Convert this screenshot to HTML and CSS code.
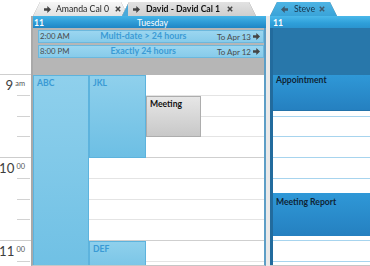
FILE: index.html
```html
<!DOCTYPE html>
<html>
<head>
<meta charset="utf-8">
<link rel="stylesheet" href="styles.css">
</head>
<body>
<div class="app">
  <div class="timecol">
    <div class="time-top"></div>
    <div class="hour">
      <div class="tlabel"><span class="hh">9</span><span class="mm">am</span></div>
      <div class="tick t1"></div><div class="tick t2"></div><div class="tick t3"></div><div class="tick full"></div>
    </div>
    <div class="hour">
      <div class="tlabel"><span class="hh">10</span><span class="mm">00</span></div>
      <div class="tick t1"></div><div class="tick t2"></div><div class="tick t3"></div><div class="tick full"></div>
    </div>
    <div class="hour">
      <div class="tlabel"><span class="hh">11</span><span class="mm">00</span></div>
      <div class="tick t1"></div><div class="tick t2"></div><div class="tick t3"></div><div class="tick full"></div>
    </div>
  </div>

  <div class="group g1">
    <div class="tabs">
      <div class="tabwrap">
        <div class="tab tab-amanda">
          <svg class="ic-arrow" viewBox="0 0 7 7" width="7" height="7"><path d="M0 2.2H3.3V0L7 3.5 3.3 7V4.8H0Z" fill="#454545"/></svg>
          <span class="tab-text">Amanda Cal 0</span>
          <svg class="ic-close" viewBox="0 0 6 6" width="6" height="6"><path d="M0.8 0.8L5.2 5.2M5.2 0.8L0.8 5.2" stroke="#444" stroke-width="1.5"/></svg>
        </div>
      </div>
      <div class="tabwrap wrap-david">
        <div class="tab tab-david">
          <svg class="ic-arrow" viewBox="0 0 7 7" width="7" height="7"><path d="M0 2.2H3.3V0L7 3.5 3.3 7V4.8H0Z" fill="#454545"/></svg>
          <span class="tab-text bold">David - David Cal 1</span>
          <svg class="ic-close" viewBox="0 0 6 6" width="6" height="6"><path d="M0.8 0.8L5.2 5.2M5.2 0.8L0.8 5.2" stroke="#444" stroke-width="1.5"/></svg>
        </div>
      </div>
    </div>
    <div class="frame frame1">
      <div class="dayhead">
        <span class="dnum">11</span><span class="dname">Tuesday</span><span></span>
      </div>
      <div class="allday">
        <div class="adbar">
          <span class="adtime">2:00 AM</span>
          <span class="adtitle">Multi-date &gt; 24 hours</span>
          <span class="adto">To Apr 13 <svg viewBox="0 0 7 7" width="7" height="7"><path d="M0 2.2H3.3V0L7 3.5 3.3 7V4.8H0Z" fill="#454545"/></svg></span>
        </div>
        <div class="adbar">
          <span class="adtime">8:00 PM</span>
          <span class="adtitle">Exactly 24 hours</span>
          <span class="adto">To Apr 12 <svg viewBox="0 0 7 7" width="7" height="7"><path d="M0 2.2H3.3V0L7 3.5 3.3 7V4.8H0Z" fill="#454545"/></svg></span>
        </div>
      </div>
      <div class="daybody">
        <div class="slots">
          <div class="slot"></div><div class="slot"></div><div class="slot"></div><div class="slot hr"></div>
          <div class="slot"></div><div class="slot"></div><div class="slot"></div><div class="slot hr"></div>
          <div class="slot"></div><div class="slot"></div>
        </div>
        <div class="events">
          <div class="ev light ev-abc">ABC</div>
          <div class="ev light ev-jkl">JKL</div>
          <div class="ev grey ev-meet">Meeting</div>
          <div class="ev light ev-def">DEF</div>
        </div>
      </div>
    </div>
  </div>

  <div class="gap"></div>

  <div class="group g2">
    <div class="tabs">
      <div class="tabwrap">
        <div class="tab tab-steve">
          <svg class="ic-arrow" viewBox="0 0 7 7" width="7" height="7"><path d="M7 2.2H3.7V0L0 3.5 3.7 7V4.8H7Z" fill="#3e5a6e"/></svg>
          <span class="tab-text steve-text">Steve</span>
          <svg class="ic-close" viewBox="0 0 6 6" width="6" height="6"><path d="M0.8 0.8L5.2 5.2M5.2 0.8L0.8 5.2" stroke="#3e5a6e" stroke-width="1.5"/></svg>
        </div>
      </div>
    </div>
    <div class="frame frame2">
      <div class="dayhead dayhead2"><span class="dnum">11</span></div>
      <div class="allday2"></div>
      <div class="daybody daybody2">
        <div class="slots">
          <div class="slot"></div><div class="slot"></div><div class="slot"></div><div class="slot"></div>
          <div class="slot"></div><div class="slot"></div><div class="slot"></div><div class="slot"></div>
          <div class="slot"></div><div class="slot"></div>
        </div>
        <div class="events events2">
          <div class="ev dark ev-appt">Appointment</div>
          <div class="ev dark ev-report">Meeting Report</div>
        </div>
      </div>
    </div>
  </div>
</div>
</body>
</html>
```

FILE: styles.css
```css
* { box-sizing: border-box; }
html, body { margin: 0; padding: 0; }
body {
  width: 370px;
  height: 266px;
  overflow: hidden;
  background: #fff;
  font-family: Lato, "Liberation Sans", sans-serif;
  font-size: 8.5px;
  color: #222;
}
.app { display: flex; height: 266px; overflow: hidden; }

/* time column */
.timecol { width: 31px; flex: none; display: flex; flex-direction: column; color: #444; overflow: hidden; }
.time-top { height: 75px; flex: none; border-bottom: 1px solid #cfcfcf; }
.hour { display: grid; grid-template-columns: 100%; grid-template-rows: repeat(4, 20.75px); flex: none; }
.tlabel {
  grid-row: 1; grid-column: 1;
  display: flex; justify-content: flex-end; align-items: flex-start;
  padding: 4px 6px 0 0; line-height: 1;
}
.hh { font-size: 13.2px; color: #3d3d3d; }
.mm { font-size: 7.4px; margin-left: 2px; margin-top: 1px; color: #555; }
.tick { grid-column: 1; align-self: end; justify-self: end; width: 13px; height: 1px; margin-right: 1px; background: #d2d2d2; }
.t1 { grid-row: 1; }
.t2 { grid-row: 2; }
.t3 { grid-row: 3; }
.tick.full { grid-row: 4; width: auto; justify-self: stretch; margin-right: 0; background: #cdcdcd; }

/* groups */
.group { display: flex; flex-direction: column; }
.g1 { width: 235px; flex: none; }
.g2 { flex: 1; min-width: 0; }
.tabs { height: 16px; flex: none; display: flex; align-items: flex-end; }
.g1 .tabs { padding-left: 2px; }
.tabwrap { filter: drop-shadow(0 0 0.5px #808080); }
.wrap-david { margin-left: -6px; }
.tab {
  height: 14px;
  display: flex; align-items: center;
  padding-left: 11px;
  clip-path: polygon(7px 0, calc(100% - 7px) 0, 100% 100%, 0 100%);
  white-space: nowrap; line-height: 1;
  font-size: 8.7px;
}
.tab-amanda { width: 95px; background: linear-gradient(#f7f7f7, #e2e2e2); }
.tab-david {
  width: 134px;
  background: linear-gradient(to right, #4aa9da 0, #4aa9da 6px, transparent 6px), linear-gradient(#e2e2e2, #cfcfcf);
}
.tab-steve { width: 67px; background: linear-gradient(#4db4e4, #3aa3d8); }
.ic-arrow { flex: none; margin-right: 5px; }
.tab-david .ic-arrow { margin-right: 6px; }
.tab-text { color: #1e1e1e; }
.tab-text.bold { font-weight: 700; color: #111; }
.steve-text { color: #18344a; margin-left: 1px; }
.ic-close { flex: none; margin-left: 6px; }
.tab-david .ic-close { margin-left: 7px; }
.tab-steve .ic-close { margin-left: 4px; }

/* frames */
.frame { flex: 1; min-height: 0; display: flex; flex-direction: column; border-bottom: 1px solid #c6c6c6; }
.frame1 { border-left: 2px solid #a9a9a9; border-right: 2px solid #5d9ec6; }
.dayhead {
  height: 12px; flex: none;
  display: grid; grid-template-columns: 1fr auto 1fr; align-items: end;
  color: #fff; line-height: 1; font-size: 8.7px;
  background: linear-gradient(#46b4e7, #2d9ad5 55%, #1f86c5);
  padding-left: 1px;
  margin-right: -2px;
}
.dnum { font-weight: 700; }
.dname { margin-left: 5px; }
.dayhead2 { margin-right: 0; padding-left: 3px; background: linear-gradient(#4ab8ea, #2e9fd9 60%, #2a94cf); }

.allday {
  height: 47px; flex: none;
  background: #b6b6b6;
  padding: 2px 0 0 5px;
  display: flex; flex-direction: column; gap: 2px;
}
.adbar {
  height: 13px;
  display: flex; align-items: center;
  background: linear-gradient(#9bd6f0, #87cbea);
  border: 1px solid #6cb8dd;
  padding: 0 3px 0 1px;
  line-height: 1;
}
.adtime { font-size: 7.8px; color: #4a4a4a; }
.adtitle { flex: 1; text-align: center; font-weight: 700; color: #3b9bd5; font-size: 8.9px; }
.adto { font-size: 8px; color: #4a4a4a; display: flex; align-items: center; gap: 2px; }

.daybody { flex: 1; min-height: 0; display: grid; grid-template-columns: 100%; overflow: hidden; }
.slots, .events { grid-area: 1 / 1; }
.slots { display: flex; flex-direction: column; }
.slot { height: 20.75px; flex: none; border-bottom: 1px solid #e4e4e4; }
.slot.hr { border-bottom-color: #cfcfcf; }
.events {
  display: grid;
  grid-template-columns: 56px 57px 55px 1fr;
  grid-template-rows: repeat(10, 20.75px);
}
.ev { font-weight: 700; line-height: 1; padding: 3px 3px; font-size: 8.6px; }
.light { background: linear-gradient(#8fd0ec, #6dbfe4); border: 1px solid #5db3dd; color: #3a9ad4; }
.grey { background: linear-gradient(#e6e6e6, #c8c8c8); border: 1px solid #adadad; color: #111; }
.ev-abc { grid-column: 1; grid-row: 1 / 11; }
.ev-jkl { grid-column: 2; grid-row: 1 / 5; }
.ev-meet { grid-column: 3; grid-row: 2 / 4; }
.ev-def { grid-column: 2; grid-row: 9 / 11; }

.gap { width: 4px; flex: none; margin-top: 16px; background: #e9e9e9; }

.allday2 { height: 47px; flex: none; background: #2877aa; border-left: 3px solid #226b9d; }
.daybody2 { border-left: 3px solid #226b9d; }
.daybody2 .slot { border-bottom-color: #a7d4ee; }
.events2 { grid-template-columns: 100%; }
.dark { background: linear-gradient(#2f98d7, #2580c0); color: #0f2435; }
.ev-appt { grid-column: 1; grid-row: 1 / 3; align-self: start; height: 36px; padding-top: 1px; border-bottom: 1px solid #2373aa; }
.ev-report { grid-column: 1; grid-row: 6 / 9; margin-top: 14.5px; margin-bottom: 5px; padding-top: 5px; }
```
